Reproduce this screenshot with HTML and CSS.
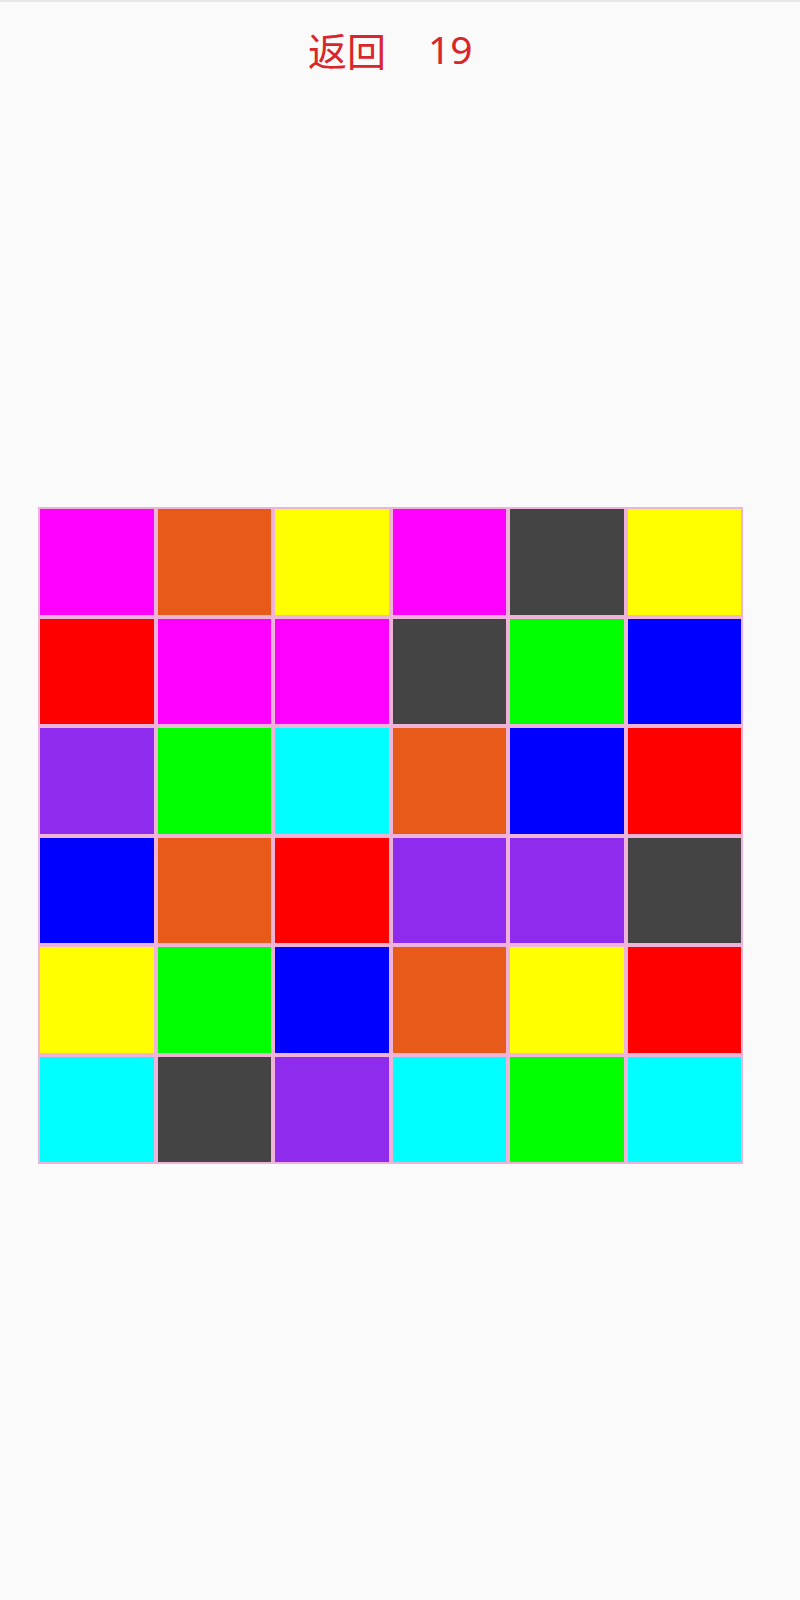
FILE: index.html
```html
<!DOCTYPE html>
<html lang="zh">
<head>
<meta charset="utf-8">
<link rel="stylesheet" href="styles.css">
</head>
<body>
<div class="topline"></div>
<header class="header">
  <span class="back">返回</span>
  <span class="count">19</span>
</header>
<main class="board">
  <div class="cell magenta"></div><div class="cell orange"></div><div class="cell yellow"></div><div class="cell magenta"></div><div class="cell dark"></div><div class="cell yellow"></div>
  <div class="cell red"></div><div class="cell magenta"></div><div class="cell magenta"></div><div class="cell dark"></div><div class="cell green"></div><div class="cell blue"></div>
  <div class="cell purple"></div><div class="cell green"></div><div class="cell cyan"></div><div class="cell orange"></div><div class="cell blue"></div><div class="cell red"></div>
  <div class="cell blue"></div><div class="cell orange"></div><div class="cell red"></div><div class="cell purple"></div><div class="cell purple"></div><div class="cell dark"></div>
  <div class="cell yellow"></div><div class="cell green"></div><div class="cell blue"></div><div class="cell orange"></div><div class="cell yellow"></div><div class="cell red"></div>
  <div class="cell cyan"></div><div class="cell dark"></div><div class="cell purple"></div><div class="cell cyan"></div><div class="cell green"></div><div class="cell cyan"></div>
</main>
</body>
</html>
```
FILE: styles.css
```css
html, body {
  margin: 0;
  padding: 0;
  background: #fafafa;
}
body {
  font-family: "Noto Sans", "Noto Sans CJK SC", sans-serif;
  width: 800px;
  min-height: 1600px;
}
.topline {
  height: 2px;
  background: #e6e6e6;
}
.header {
  display: flex;
  align-items: center;
  gap: 42px;
  padding-left: 308px;
  margin-top: 26px;
  height: 42px;
  color: #d8262b;
  font-size: 39px;
  line-height: 42px;
}
.back {
  font-family: "Noto Sans CJK SC", sans-serif;
}
.count {
  font-family: "Noto Sans", sans-serif;
}
.board {
  display: grid;
  grid-template-columns: repeat(6, 117.5px);
  grid-template-rows: repeat(6, 109.5px);
  width: 705px;
  margin-top: 437px;
  margin-left: 38px;
}
.cell {
  box-sizing: border-box;
  border: 2px solid #efb3d9;
}
.magenta { background: #ff00ff; }
.orange { background: #e85a19; }
.yellow { background: #ffff00; }
.dark { background: #444444; }
.red { background: #ff0000; }
.green { background: #00ff00; }
.blue { background: #0000ff; }
.purple { background: #8e2bed; }
.cyan { background: #00ffff; }
```
